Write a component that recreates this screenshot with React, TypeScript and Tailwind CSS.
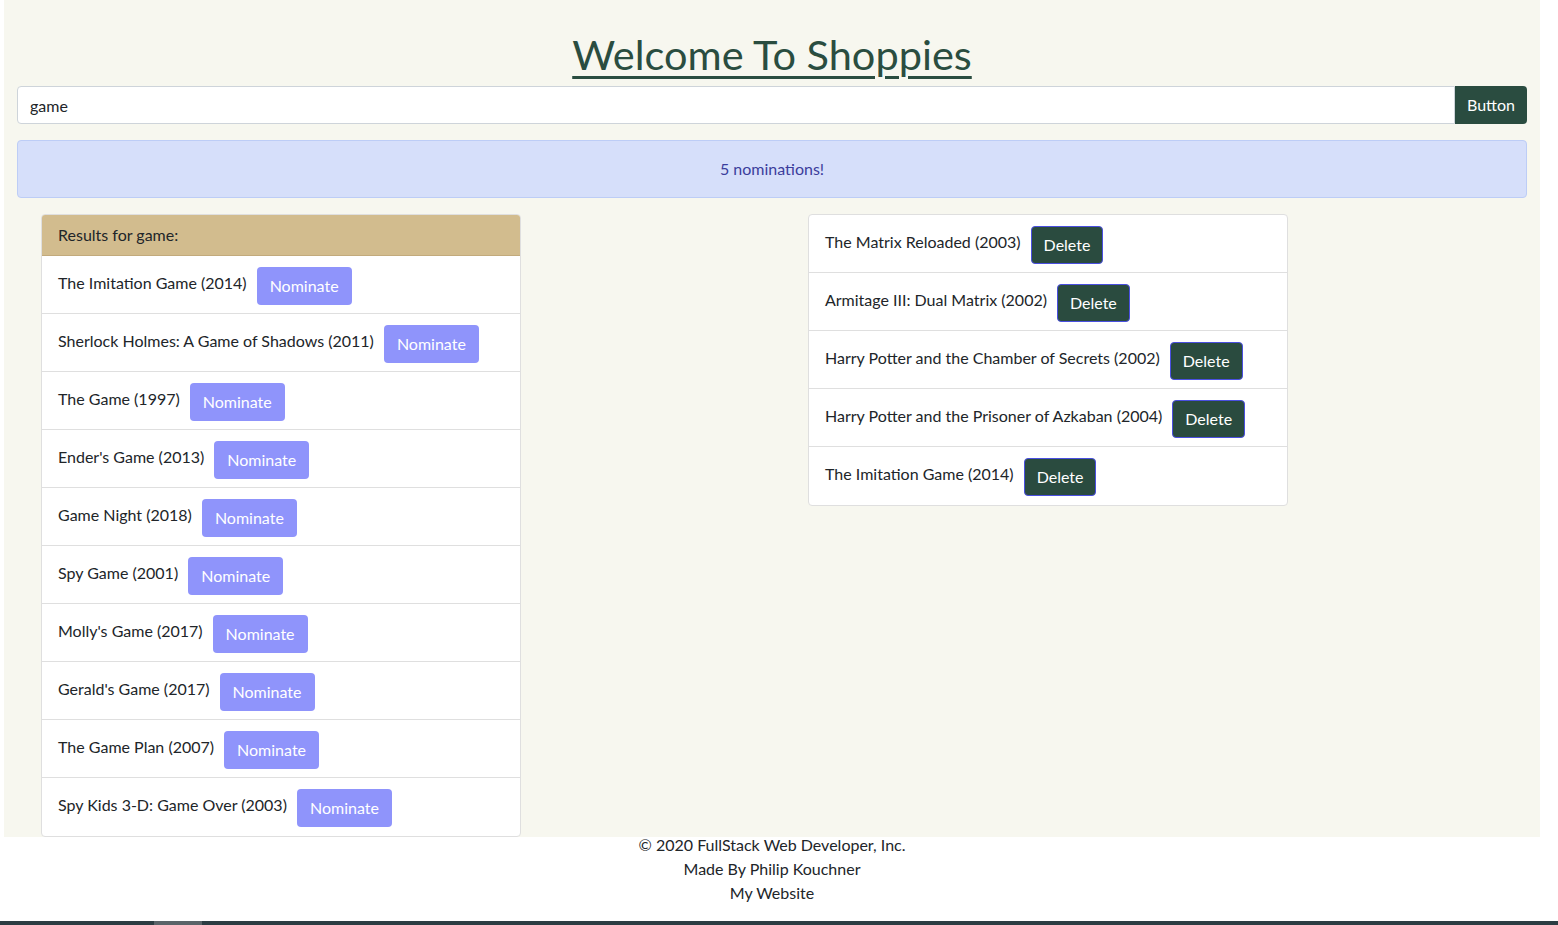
import React from "react";

const results = [
  "The Imitation Game (2014)",
  "Sherlock Holmes: A Game of Shadows (2011)",
  "The Game (1997)",
  "Ender's Game (2013)",
  "Game Night (2018)",
  "Spy Game (2001)",
  "Molly's Game (2017)",
  "Gerald's Game (2017)",
  "The Game Plan (2007)",
  "Spy Kids 3-D: Game Over (2003)",
];

const nominations = [
  "The Matrix Reloaded (2003)",
  "Armitage III: Dual Matrix (2002)",
  "Harry Potter and the Chamber of Secrets (2002)",
  "Harry Potter and the Prisoner of Azkaban (2004)",
  "The Imitation Game (2014)",
];

function ResultsCard() {
  return (
    <div className="w-[480px] bg-white border border-[#dfdfdf] rounded-[4px] overflow-hidden">
      <div className="h-[41px] bg-[#d2bc8e] border-b border-[#c2aa7c] pl-[16px] flex items-center text-[16px] text-[#212529]">
        Results for game:
      </div>
      {results.map((title, i) => (
        <div
          key={title}
          className={`h-[58px] flex items-start pl-[16px] ${i < results.length - 1 ? "border-b border-[#dfdfdf]" : ""}`}
        >
          <span className="mt-[15px] leading-6 text-[16px] text-[#212529] whitespace-nowrap">{title}</span>
          <button className="ml-[10px] mt-[11px] h-[38px] px-[13px] rounded-[4px] bg-[#8f94fb] text-white text-[16px] leading-6">
            Nominate
          </button>
        </div>
      ))}
    </div>
  );
}

function NominationsCard() {
  return (
    <div className="w-[480px] bg-white border border-[#dfdfdf] rounded-[4px] overflow-hidden">
      {nominations.map((title, i) => (
        <div
          key={title}
          className={`h-[58px] flex items-start pl-[16px] ${i < nominations.length - 1 ? "border-b border-[#dfdfdf]" : ""}`}
        >
          <span className="mt-[15px] leading-6 text-[16px] text-[#212529] whitespace-nowrap">{title}</span>
          <button className="ml-[10px] mt-[11px] h-[38px] px-[12px] rounded-[4px] bg-[#2a4b3f] border border-[#4a4fe0] text-white text-[16px] leading-6">
            Delete
          </button>
        </div>
      ))}
    </div>
  );
}

export default function App() {
  return (
    <div className="min-h-[925px] bg-white flex flex-col font-['Lato','Open_Sans',sans-serif]">
      <div className="ml-[4px] mr-[18px] bg-[#f7f7ef]">
        <h1 className="pt-[30px] text-center text-[41.5px] leading-[48px] text-[#2a4d40] underline decoration-[3px] underline-offset-[6px]">
          Welcome To Shoppies
        </h1>
        <div className="mx-[13px] mt-[8px] flex h-[38px]">
          <input
            className="flex-1 h-[38px] bg-white border border-[#ced4da] rounded-l-[4px] px-[12px] text-[16px] text-[#212529] outline-none"
            defaultValue="game"
          />
          <button className="h-[38px] px-[12px] bg-[#2a4c40] text-white text-[16px] rounded-r-[4px]">Button</button>
        </div>
        <div className="mx-[13px] mt-[16px] h-[58px] bg-[#d6dffa] border border-[#bdcdf6] rounded-[4px] flex items-center justify-center text-[16px] text-[#3b3d9c]">
          5 nominations!
        </div>
        <div className="mt-[16px] pl-[37px] flex items-start gap-[287px]">
          <ResultsCard />
          <NominationsCard />
        </div>
      </div>
      <div className="ml-[4px] mr-[18px] -mt-[4px] flex flex-col items-center text-[16px] leading-6 text-[#212529]">
        <span>© 2020 FullStack Web Developer, Inc.</span>
        <span>Made By Philip Kouchner</span>
        <span>My Website</span>
      </div>
      <div className="flex-1" />
      <div className="h-[4px] bg-[#2c3d43] flex">
        <div className="ml-[154px] w-[48px] bg-[#5a6469]" />
      </div>
    </div>
  );
}
